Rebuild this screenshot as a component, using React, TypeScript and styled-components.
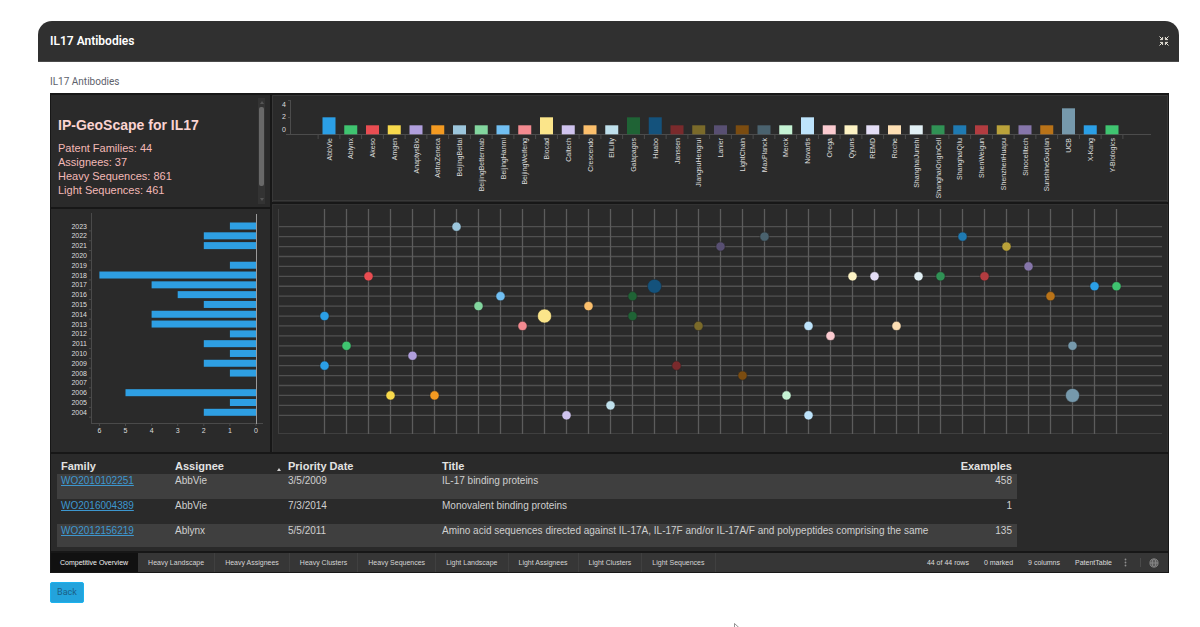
import React from "react";
import styled, { createGlobalStyle } from "styled-components";

const GlobalStyle = createGlobalStyle`
  *, *::before, *::after { box-sizing: border-box; }
  body {
    margin: 0;
    background: #ffffff;
    font-family: "Liberation Sans", Arial, sans-serif;
  }
`;

const Page = styled.main`
  padding: 21px 21px 0 38px;
`;

const TitleBar = styled.header`
  display: flex;
  align-items: center;
  justify-content: space-between;
  height: 41px;
  padding: 0 10px 0 12px;
  border-bottom: 1px solid #4a4a4a;
  border-radius: 14px 14px 0 0;
  background: #303030;
`;

const PageTitle = styled.h1`
  margin: 0;
  font: 600 12px/16px Roboto, sans-serif;
  color: #ffffff;
`;

const IconButton = styled.button<{ $size: number }>`
  display: flex;
  align-items: center;
  justify-content: center;
  width: ${(p) => p.$size}px;
  height: ${(p) => p.$size}px;
  padding: 0;
  border: 0;
  background: none;
  color: inherit;
`;

const Content = styled.section`
  padding: 13px 10px 0 12px;
`;

const Subtitle = styled.h2`
  margin: 0 0 4px;
  font: 400 10px/14px Roboto, sans-serif;
  color: #5d616b;
`;

const Dashboard = styled.div`
  display: flex;
  flex-direction: column;
  gap: 2px;
  padding: 2px 1px 1px;
  background: #171717;
`;

const ChartArea = styled.div`
  display: grid;
  grid-template-columns: 219px minmax(0, 1fr);
  gap: 2px;
`;

const Stack = styled.div`
  display: flex;
  flex-direction: column;
  gap: 2px;
`;

const Panel = styled.section`
  background: #2a2a2a;
  overflow: hidden;
`;

const SummaryPanel = styled(Panel)`
  display: flex;
  justify-content: space-between;
  height: 112px;
  padding: 3px 5px 3px 7px;
`;

const SummaryTitle = styled.h3`
  margin: 18px 0 7px;
  font-size: 14px;
  line-height: 18px;
  color: #fbd3d1;
`;

const SummaryLine = styled.p`
  margin: 0;
  font-size: 11px;
  line-height: 14px;
  color: #f3b9b7;
`;

const ScrollTrack = styled.div`
  display: flex;
  flex-direction: column;
  align-items: center;
  width: 7px;
  padding: 3px 0;
  background: #333333;
`;

const ScrollThumb = styled.div`
  width: 5px;
  height: 79px;
  margin: 3px 0 auto;
  border-radius: 2px;
  background: #686868;
`;

const ScrollArrow = styled.span<{ $down?: boolean }>`
  border: 2px solid transparent;
  border-top-width: ${(p) => (p.$down ? 3 : 0)}px;
  border-bottom-width: ${(p) => (p.$down ? 0 : 3)}px;
  border-top-color: #555555;
  border-bottom-color: #555555;
`;

const Chart = styled.svg`
  display: block;
  width: 100%;
  height: auto;
`;

const AxisText = styled.text`
  font-size: 7px;
  fill: #dedede;
  dominant-baseline: central;
`;

const TablePanel = styled(Panel)`
  padding: 0 151px 4px 6px;
`;

const DataTable = styled.table`
  width: 100%;
  table-layout: fixed;
  border-collapse: collapse;
`;

const HeadCell = styled.th<{ $width?: number; $right?: boolean }>`
  width: ${(p) => (p.$width ? `${p.$width}px` : "auto")};
  height: 20px;
  padding: 5px 5px 0 4px;
  text-align: ${(p) => (p.$right ? "right" : "left")};
  vertical-align: top;
  font-size: 11px;
  line-height: 14px;
  color: #e2e2e2;
`;

const SortMark = styled.span`
  float: right;
  margin: 9px -2px 0 0;
  border: 2px solid transparent;
  border-top: 0;
  border-bottom: 3px solid #d0d0d0;
`;

const Row = styled.tr`
  &:nth-child(odd) { background: #3f3f3f; }
  &:last-child td { height: 23px; }
`;

const Cell = styled.td<{ $right?: boolean }>`
  height: 25px;
  padding: 0 5px 0 4px;
  text-align: ${(p) => (p.$right ? "right" : "left")};
  vertical-align: top;
  white-space: nowrap;
  font-size: 10px;
  line-height: 13px;
  color: #cfcfcf;
`;

const FamilyLink = styled.a`
  color: #3d97cf;
`;

const Footer = styled.footer`
  display: flex;
  justify-content: space-between;
  height: 19px;
  background: #363636;
`;

const Tabs = styled.nav`
  display: flex;
`;

const Tab = styled.button<{ $active?: boolean }>`
  padding: 0 ${(p) => (p.$active ? 9 : 10)}px;
  border: 0;
  border-right: 1px solid ${(p) => (p.$active ? "#111111" : "#404040")};
  background: ${(p) => (p.$active ? "#111111" : "none")};
  font: 7px/19px "Liberation Sans", Arial, sans-serif;
  color: ${(p) => (p.$active ? "#f0f0f0" : "#d4d4d4")};
  white-space: nowrap;
`;

const Status = styled.div`
  display: flex;
  align-items: center;
  gap: 15px;
  padding-right: 9px;
  font-size: 7px;
  line-height: 19px;
  color: #dcdcdc;
  white-space: nowrap;
`;

const StatusTools = styled.div`
  display: flex;
  align-items: center;
  margin-left: -7px;
  color: #8f8f8f;
`;

const Divider = styled.span`
  width: 1px;
  height: 9px;
  margin: 0 8px 0 10px;
  background: #4a4a4a;
`;

const BackButton = styled.button`
  display: block;
  width: 34px;
  height: 21px;
  margin-top: 9px;
  padding: 0;
  border: 1px solid #1cb2ee;
  border-radius: 2px;
  background: #23a3dc;
  font: 400 9px/19px Roboto, sans-serif;
  color: #1b5f86;
`;

const Pointer = styled.svg`
  position: fixed;
  left: 734px;
  bottom: -7px;
`;

type Assignee = {
  name: string;
  color: string;
  total: number;
  points: { year: number; big?: boolean }[];
};

const one = (name: string, color: string, year: number): Assignee => ({
  name,
  color,
  total: 1,
  points: [{ year }],
});

const assignees: Assignee[] = [
  { name: "AbbVie", color: "#2b9fe6", total: 2, points: [{ year: 2014 }, { year: 2009 }] },
  one("Ablynx", "#3fc470", 2011),
  one("Akeso", "#e94d52", 2018),
  one("Amgen", "#f7d94c", 2006),
  one("AnaptysBio", "#b09fdd", 2010),
  one("AstraZeneca", "#f39a21", 2006),
  one("BeijingBeitai", "#9cc6dc", 2023),
  one("BeijingBettermab", "#83d69f", 2015),
  one("BeijingHanmi", "#71bff2", 2016),
  one("BeijingWeifeng", "#f38a90", 2013),
  { name: "Biocad", color: "#fbe58a", total: 2, points: [{ year: 2014, big: true }] },
  one("Caltech", "#cfc3ee", 2004),
  one("Crescendo", "#fbbf6c", 2015),
  one("EliLilly", "#bfe0ec", 2005),
  { name: "Galapagos", color: "#1f6335", total: 2, points: [{ year: 2016 }, { year: 2014 }] },
  { name: "Huabo", color: "#14527c", total: 2, points: [{ year: 2017, big: true }] },
  one("Janssen", "#7a2a2c", 2009),
  one("JiangsuHengrui", "#7a6a2a", 2013),
  one("Lanier", "#584f72", 2021),
  one("LightChain", "#7b4c10", 2008),
  one("MaxPlanck", "#4a626e", 2022),
  one("Merck", "#c5f3d4", 2006),
  { name: "Novartis", color: "#bde3fb", total: 2, points: [{ year: 2013 }, { year: 2004 }] },
  one("Orega", "#fbcbd0", 2012),
  one("Qyuns", "#fdf3c4", 2018),
  one("REMD", "#e4def6", 2018),
  one("Roche", "#fddfb4", 2013),
  one("ShanghaiJunshi", "#e2f0f5", 2018),
  one("ShanghaiOriginCell", "#309255", 2018),
  one("ShanghaiQilu", "#1f7ab2", 2022),
  one("ShenWeigun", "#b23c40", 2018),
  one("ShenzhenHuapu", "#baa23a", 2021),
  one("Sinocelltech", "#8676aa", 2019),
  one("SunshineGuojian", "#b97318", 2016),
  { name: "UCB", color: "#7699ac", total: 3, points: [{ year: 2011 }, { year: 2006, big: true }] },
  one("X-Kang", "#2b9fe6", 2017),
  one("Y-Biologics", "#3fc470", 2017),
];

const yearCounts: [number, number][] = [
  [2023, 1], [2022, 2], [2021, 2], [2020, 0], [2019, 1], [2018, 6], [2017, 4],
  [2016, 3], [2015, 2], [2014, 4], [2013, 4], [2012, 1], [2011, 2], [2010, 1],
  [2009, 2], [2008, 1], [2007, 0], [2006, 5], [2005, 1], [2004, 2],
];

const families = [
  { id: "WO2010102251", assignee: "AbbVie", date: "3/5/2009", title: "IL-17 binding proteins", examples: 458 },
  { id: "WO2016004389", assignee: "AbbVie", date: "7/3/2014", title: "Monovalent binding proteins", examples: 1 },
  {
    id: "WO2012156219",
    assignee: "Ablynx",
    date: "5/5/2011",
    title:
      "Amino acid sequences directed against IL-17A, IL-17F and/or IL-17A/F and polypeptides comprising the same",
    examples: 135,
  },
];

const tabs = [
  "Competitive Overview", "Heavy Landscape", "Heavy Assignees", "Heavy Clusters",
  "Heavy Sequences", "Light Landscape", "Light Assignees", "Light Clusters", "Light Sequences",
];

const lerp = (from: number, to: number, t: number) => from + (to - from) * t;

function AssigneeChart() {
  const base = 39;
  const x = (i: number) => lerp(57, 840, i / 36);
  const barHeight = (total: number) => (total > 1 ? total * 9 - 1 : 9);
  return (
    <Chart viewBox="0 0 896 107" role="img" aria-label="Patent families per assignee">
      <path d="M0.5 107V0.5H895.5V107M0 105.5H896" fill="none" stroke="#383838" />
      <path d={`M18.5 5V${base}M16 5.5h3M16 22.5h3M14 ${base + 0.5}H879`} stroke="#4c4c4c" fill="none" />
      {[4, 2, 0].map((n, i) => (
        <AxisText key={n} x={12} y={9 + i * 12.5} textAnchor="middle">{n}</AxisText>
      ))}
      {assignees.map((a, i) => (
        <g key={a.name}>
          <path d={`M${x(i - 0.5)} ${base}v5`} stroke="#4c4c4c" />
          <rect x={x(i) - 6.5} y={base + 0.3 - barHeight(a.total)} width={13} height={barHeight(a.total)} fill={a.color} />
          <AxisText transform={`translate(${x(i)} 43) rotate(-90)`} textAnchor="end">{a.name}</AxisText>
        </g>
      ))}
      <path d={`M${x(36.5)} ${base}v5`} stroke="#4c4c4c" />
    </Chart>
  );
}

function ScatterChart() {
  const x = (i: number) => lerp(52.5, 844.5, i / 36);
  const y = (year: number) => lerp(22.7, 211.3, (2023 - year) / 19);
  return (
    <Chart viewBox="0 0 896 248" role="img" aria-label="Priority year by assignee">
      <path d="M0.5 248V0.5H895.5V248" fill="none" stroke="#323232" />
      <path d="M6.5 5V230M6 229.5H890" stroke="#3f3f3f" fill="none" />
      {yearCounts.map(([year]) => (
        <path key={year} d={`M7 ${y(year)}H890`} stroke="#505050" strokeWidth={1.3} />
      ))}
      {assignees.map((a, i) => (
        <path key={a.name} d={`M${x(i)} 5V230`} stroke="#5c5c5c" strokeWidth={1.3} />
      ))}
      {assignees.flatMap((a, i) =>
        a.points.map((p) => (
          <circle key={`${a.name}-${p.year}`} cx={x(i)} cy={y(p.year)} r={p.big ? 7 : 4.6} fill={a.color} stroke="#242424" strokeWidth={0.5} />
        ))
      )}
    </Chart>
  );
}

function YearChart() {
  const y = (i: number) => lerp(17, 203.3, i / 19);
  const x = (n: number) => 205 - n * 26.1;
  return (
    <Chart viewBox="0 0 219 243" role="img" aria-label="Patent families per year">
      <path d="M40.5 4V214M40 214.5H212" stroke="#4a4a4a" fill="none" />
      {yearCounts.map(([year, n], i) => (
        <g key={year}>
          <path d={`M38 ${y(i + 0.5)}h3`} stroke="#4a4a4a" />
          <AxisText x={36} y={y(i)} textAnchor="end">{year}</AxisText>
          <rect x={x(n)} y={y(i) - 3.5} width={n * 26.1} height={7} fill="#2e9fe3" />
        </g>
      ))}
      {[6, 5, 4, 3, 2, 1, 0].map((n) => (
        <g key={n}>
          <path d={`M${x(n)} 214v3`} stroke="#4a4a4a" />
          <AxisText x={x(n)} y={221} textAnchor="middle">{n}</AxisText>
        </g>
      ))}
      <path d="M205.5 5V215" stroke="#9a9a9a" />
    </Chart>
  );
}

export default function App() {
  return (
    <>
      <GlobalStyle />
      <Page>
        <TitleBar>
          <PageTitle>IL17 Antibodies</PageTitle>
          <IconButton $size={10} aria-label="Exit full screen">
            <svg width="10" height="10" viewBox="0 0 10 10" fill="none" stroke="#e8e4da" strokeWidth="1">
              <path d="M0.5 0.5L3.6 3.6M3.6 1V3.6H1M9.5 0.5L6.4 3.6M6.4 1V3.6H9M0.5 9.5L3.6 6.4M3.6 9V6.4H1M9.5 9.5L6.4 6.4M6.4 9V6.4H9" />
            </svg>
          </IconButton>
        </TitleBar>
        <Content>
          <Subtitle>IL17 Antibodies</Subtitle>
          <Dashboard>
            <ChartArea>
              <Stack>
                <SummaryPanel>
                  <div>
                    <SummaryTitle>IP-GeoScape for IL17</SummaryTitle>
                    <SummaryLine>Patent Families: 44</SummaryLine>
                    <SummaryLine>Assignees: 37</SummaryLine>
                    <SummaryLine>Heavy Sequences: 861</SummaryLine>
                    <SummaryLine>Light Sequences: 461</SummaryLine>
                  </div>
                  <ScrollTrack>
                    <ScrollArrow />
                    <ScrollThumb />
                    <ScrollArrow $down />
                  </ScrollTrack>
                </SummaryPanel>
                <Panel><YearChart /></Panel>
              </Stack>
              <Stack>
                <Panel><AssigneeChart /></Panel>
                <Panel><ScatterChart /></Panel>
              </Stack>
            </ChartArea>
            <TablePanel>
              <DataTable>
                <thead>
                  <tr>
                    <HeadCell $width={114}>Family</HeadCell>
                    <HeadCell $width={113}>Assignee<SortMark /></HeadCell>
                    <HeadCell $width={154}>Priority Date</HeadCell>
                    <HeadCell>Title</HeadCell>
                    <HeadCell $width={80} $right>Examples</HeadCell>
                  </tr>
                </thead>
                <tbody>
                  {families.map((f) => (
                    <Row key={f.id}>
                      <Cell><FamilyLink href={`#${f.id}`}>{f.id}</FamilyLink></Cell>
                      <Cell>{f.assignee}</Cell>
                      <Cell>{f.date}</Cell>
                      <Cell>{f.title}</Cell>
                      <Cell $right>{f.examples}</Cell>
                    </Row>
                  ))}
                </tbody>
              </DataTable>
            </TablePanel>
            <Footer>
              <Tabs>
                {tabs.map((t, i) => (
                  <Tab key={t} $active={i === 0}>{t}</Tab>
                ))}
              </Tabs>
              <Status>
                <span>44 of 44 rows</span>
                <span>0 marked</span>
                <span>9 columns</span>
                <span>PatentTable</span>
                <StatusTools>
                  <IconButton $size={10} aria-label="More">
                    <svg width="3" height="9" viewBox="0 0 3 9" fill="currentColor">
                      <circle cx="1.5" cy="1.5" r="0.9" />
                      <circle cx="1.5" cy="4.5" r="0.9" />
                      <circle cx="1.5" cy="7.5" r="0.9" />
                    </svg>
                  </IconButton>
                  <Divider />
                  <IconButton $size={10} aria-label="Language">
                    <svg width="10" height="10" viewBox="0 0 10 10" fill="#5c5c5c" stroke="currentColor" strokeWidth="0.8">
                      <circle cx="5" cy="5" r="4.1" />
                      <ellipse cx="5" cy="5" rx="1.8" ry="4.1" />
                      <path d="M1 5H9" />
                    </svg>
                  </IconButton>
                </StatusTools>
              </Status>
            </Footer>
          </Dashboard>
          <BackButton>Back</BackButton>
        </Content>
      </Page>
      <Pointer width="8" height="11" viewBox="0 0 8 11" aria-hidden="true">
        <path d="M0.5 0.5V9L2.6 7L4 10L5.3 9.4L4 6.5H7Z" fill="#fff" stroke="#777" strokeWidth="0.8" />
      </Pointer>
    </>
  );
}
